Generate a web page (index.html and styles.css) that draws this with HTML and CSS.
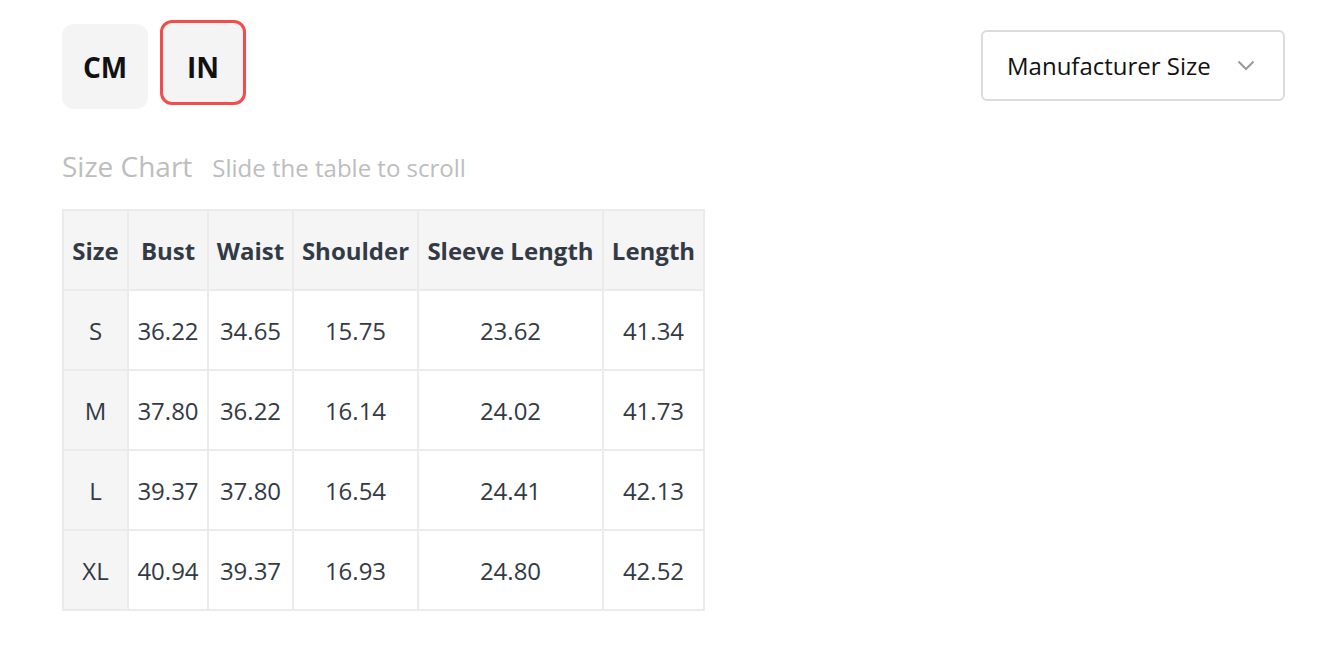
FILE: index.html
```html
<!DOCTYPE html>
<html>
<head>
<meta charset="utf-8">
<link rel="stylesheet" href="styles.css">
</head>
<body>
<div class="page">
  <div class="top">
    <div class="units">
      <div class="unit">CM</div>
      <div class="unit active">IN</div>
    </div>
    <div class="select">
      <span>Manufacturer Size</span>
      <svg class="chev" width="18" height="11" viewBox="0 0 18 11"><path d="M1.5 1.5 L9 9 L16.5 1.5" fill="none" stroke="#9a9a9a" stroke-width="2"/></svg>
    </div>
  </div>
  <div class="title"><span class="t1">Size Chart</span><span class="t2">Slide the table to scroll</span></div>
  <table class="chart">
    <thead>
      <tr><th class="c1">Size</th><th class="c2">Bust</th><th class="c3">Waist</th><th class="c4">Shoulder</th><th class="c5">Sleeve Length</th><th class="c6">Length</th></tr>
    </thead>
    <tbody>
      <tr><td class="sz">S</td><td>36.22</td><td>34.65</td><td>15.75</td><td>23.62</td><td>41.34</td></tr>
      <tr><td class="sz">M</td><td>37.80</td><td>36.22</td><td>16.14</td><td>24.02</td><td>41.73</td></tr>
      <tr><td class="sz">L</td><td>39.37</td><td>37.80</td><td>16.54</td><td>24.41</td><td>42.13</td></tr>
      <tr><td class="sz">XL</td><td>40.94</td><td>39.37</td><td>16.93</td><td>24.80</td><td>42.52</td></tr>
    </tbody>
  </table>
</div>
</body>
</html>
```

FILE: styles.css
```css
html, body { margin: 0; padding: 0; background: #fff; }
body { font-family: "Open Sans", "Noto Sans", sans-serif; color: #333a45; }
.page { padding: 20px 57px 0 62px; }
.top { display: flex; justify-content: space-between; align-items: flex-start; }
.units { display: flex; gap: 12px; align-items: flex-start; }
.unit {
  width: 86px; height: 85px; box-sizing: border-box;
  background: #f4f4f4; border-radius: 12px;
  display: flex; align-items: center; justify-content: center;
  font-weight: 700; font-size: 28px; color: #111;
  margin-top: 4px;
}
.unit.active { border: 3px solid #f44b4b; margin-top: 0; padding-top: 8px; }
.select {
  margin-top: 10px;
  width: 304px; height: 71px; box-sizing: border-box;
  border: 2px solid #dcdcdc; border-radius: 6px;
  display: flex; align-items: center; justify-content: space-between;
  padding: 0 28px 0 24px;
  font-size: 24px; color: #111;
}
.chev { display: block; }
.title { margin-top: 38px; display: flex; align-items: baseline; gap: 20px; color: #bdbdbd; }
.t1 { font-size: 28px; }
.t2 { font-size: 24px; }
.chart {
  margin-top: 24px;
  border-collapse: collapse;
  border: 2px solid #ebebeb;
  font-size: 24px;
}
.chart th, .chart td {
  border: 2px solid #ebebeb;
  text-align: center;
  padding: 0;
  height: 78px;
}
.chart th { background: #f5f5f5; font-weight: 700; color: #333a45; }
.chart td { color: #333a45; }
.chart td.sz { background: #f5f5f5; }
.c1 { width: 63px; }
.c2 { width: 78px; }
.c3 { width: 83px; }
.c4 { width: 123px; }
.c5 { width: 183px; }
.c6 { width: 99px; }
```
